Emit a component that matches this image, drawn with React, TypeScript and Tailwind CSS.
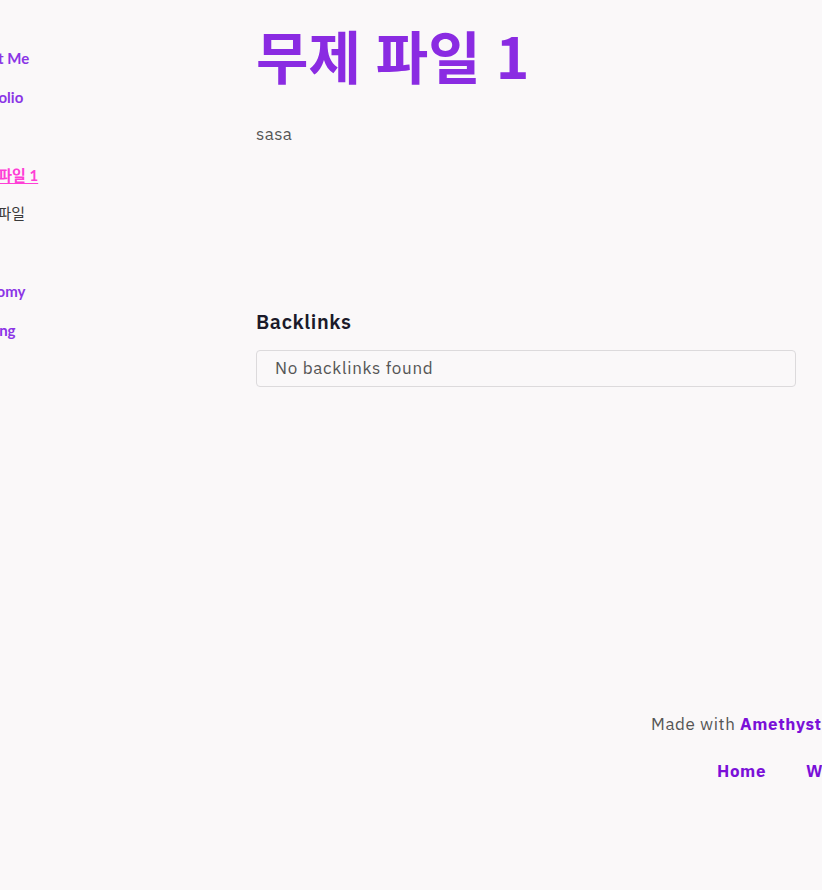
const sidebar = [
  { label: "About Me", kind: "link", indent: "ml-[5px]" },
  { label: "Portfolio", kind: "link", indent: "ml-[8px]" },
  { label: "", kind: "blank", indent: "" },
  { label: "무제 파일 1", kind: "active", indent: "ml-[10px]" },
  { label: "무제 파일", kind: "plain", indent: "ml-[9px]" },
  { label: "", kind: "blank", indent: "" },
  { label: "Taxonomy", kind: "link", indent: "ml-0" },
  { label: "Writing", kind: "link", indent: "ml-[8px]" },
];

const sans = "font-['IBM_Plex_Sans','Noto_Sans','Noto_Sans_CJK_KR',sans-serif]";

const App = () => {
  return (
    <div className={`min-h-[890px] w-[822px] overflow-hidden bg-[#faf8f9] ${sans}`}>
      <div className="flex">
        <nav className="-ml-[43px] flex w-[299px] shrink-0 flex-col pt-[39px] font-['Lato','Noto_Sans_CJK_KR',sans-serif] text-[15px]">
          {sidebar.map((item, i) => (
            <div key={i} className={`flex h-[38.8px] items-center whitespace-nowrap ${item.indent}`}>
              {item.kind === "link" && <a className="font-bold text-[#8b35e6]">{item.label}</a>}
              {item.kind === "active" && <a className="font-bold text-[#ff3fd6] underline underline-offset-2">{item.label}</a>}
              {item.kind === "plain" && <span className="text-[#3a3a3a]">{item.label}</span>}
            </div>
          ))}
        </nav>

        <main className="w-[540px] shrink-0">
          <h1 className="mt-[13px] font-['Noto_Sans_CJK_KR',sans-serif] text-[57px] font-bold leading-[82px] [word-spacing:2px] text-[#8a2be2]">
            무제 파일 1
          </h1>
          <p className="mt-[27px] text-[17px] leading-[24px] tracking-[0.4px] text-[#555]">sasa</p>

          <section className="mt-[162px]">
            <h2 className="text-[20px] font-semibold leading-[28px] tracking-[0.6px] text-[#1b1a2a]">Backlinks</h2>
            <div className="mt-[14px] flex h-[37px] items-center rounded border border-[#dcdadc] pl-[18px] text-[17px] tracking-[0.7px] text-[#555]">
              No backlinks found
            </div>
          </section>
        </main>
      </div>

      <footer className="mt-[325px] pl-[651px] whitespace-nowrap tracking-[0.6px]">
        <p className="text-[17px] leading-[24px] text-[#555]">
          Made with <a className="font-bold text-[#7a10d8]">Amethyst</a>
        </p>
        <div className="mt-[23px] flex gap-[40px] pl-[66px] text-[17px] font-bold leading-[24px] text-[#7a10d8]">
          <a>Home</a>
          <a>Writing</a>
          <a>GitHub</a>
        </div>
      </footer>
    </div>
  );
};

export default App;
